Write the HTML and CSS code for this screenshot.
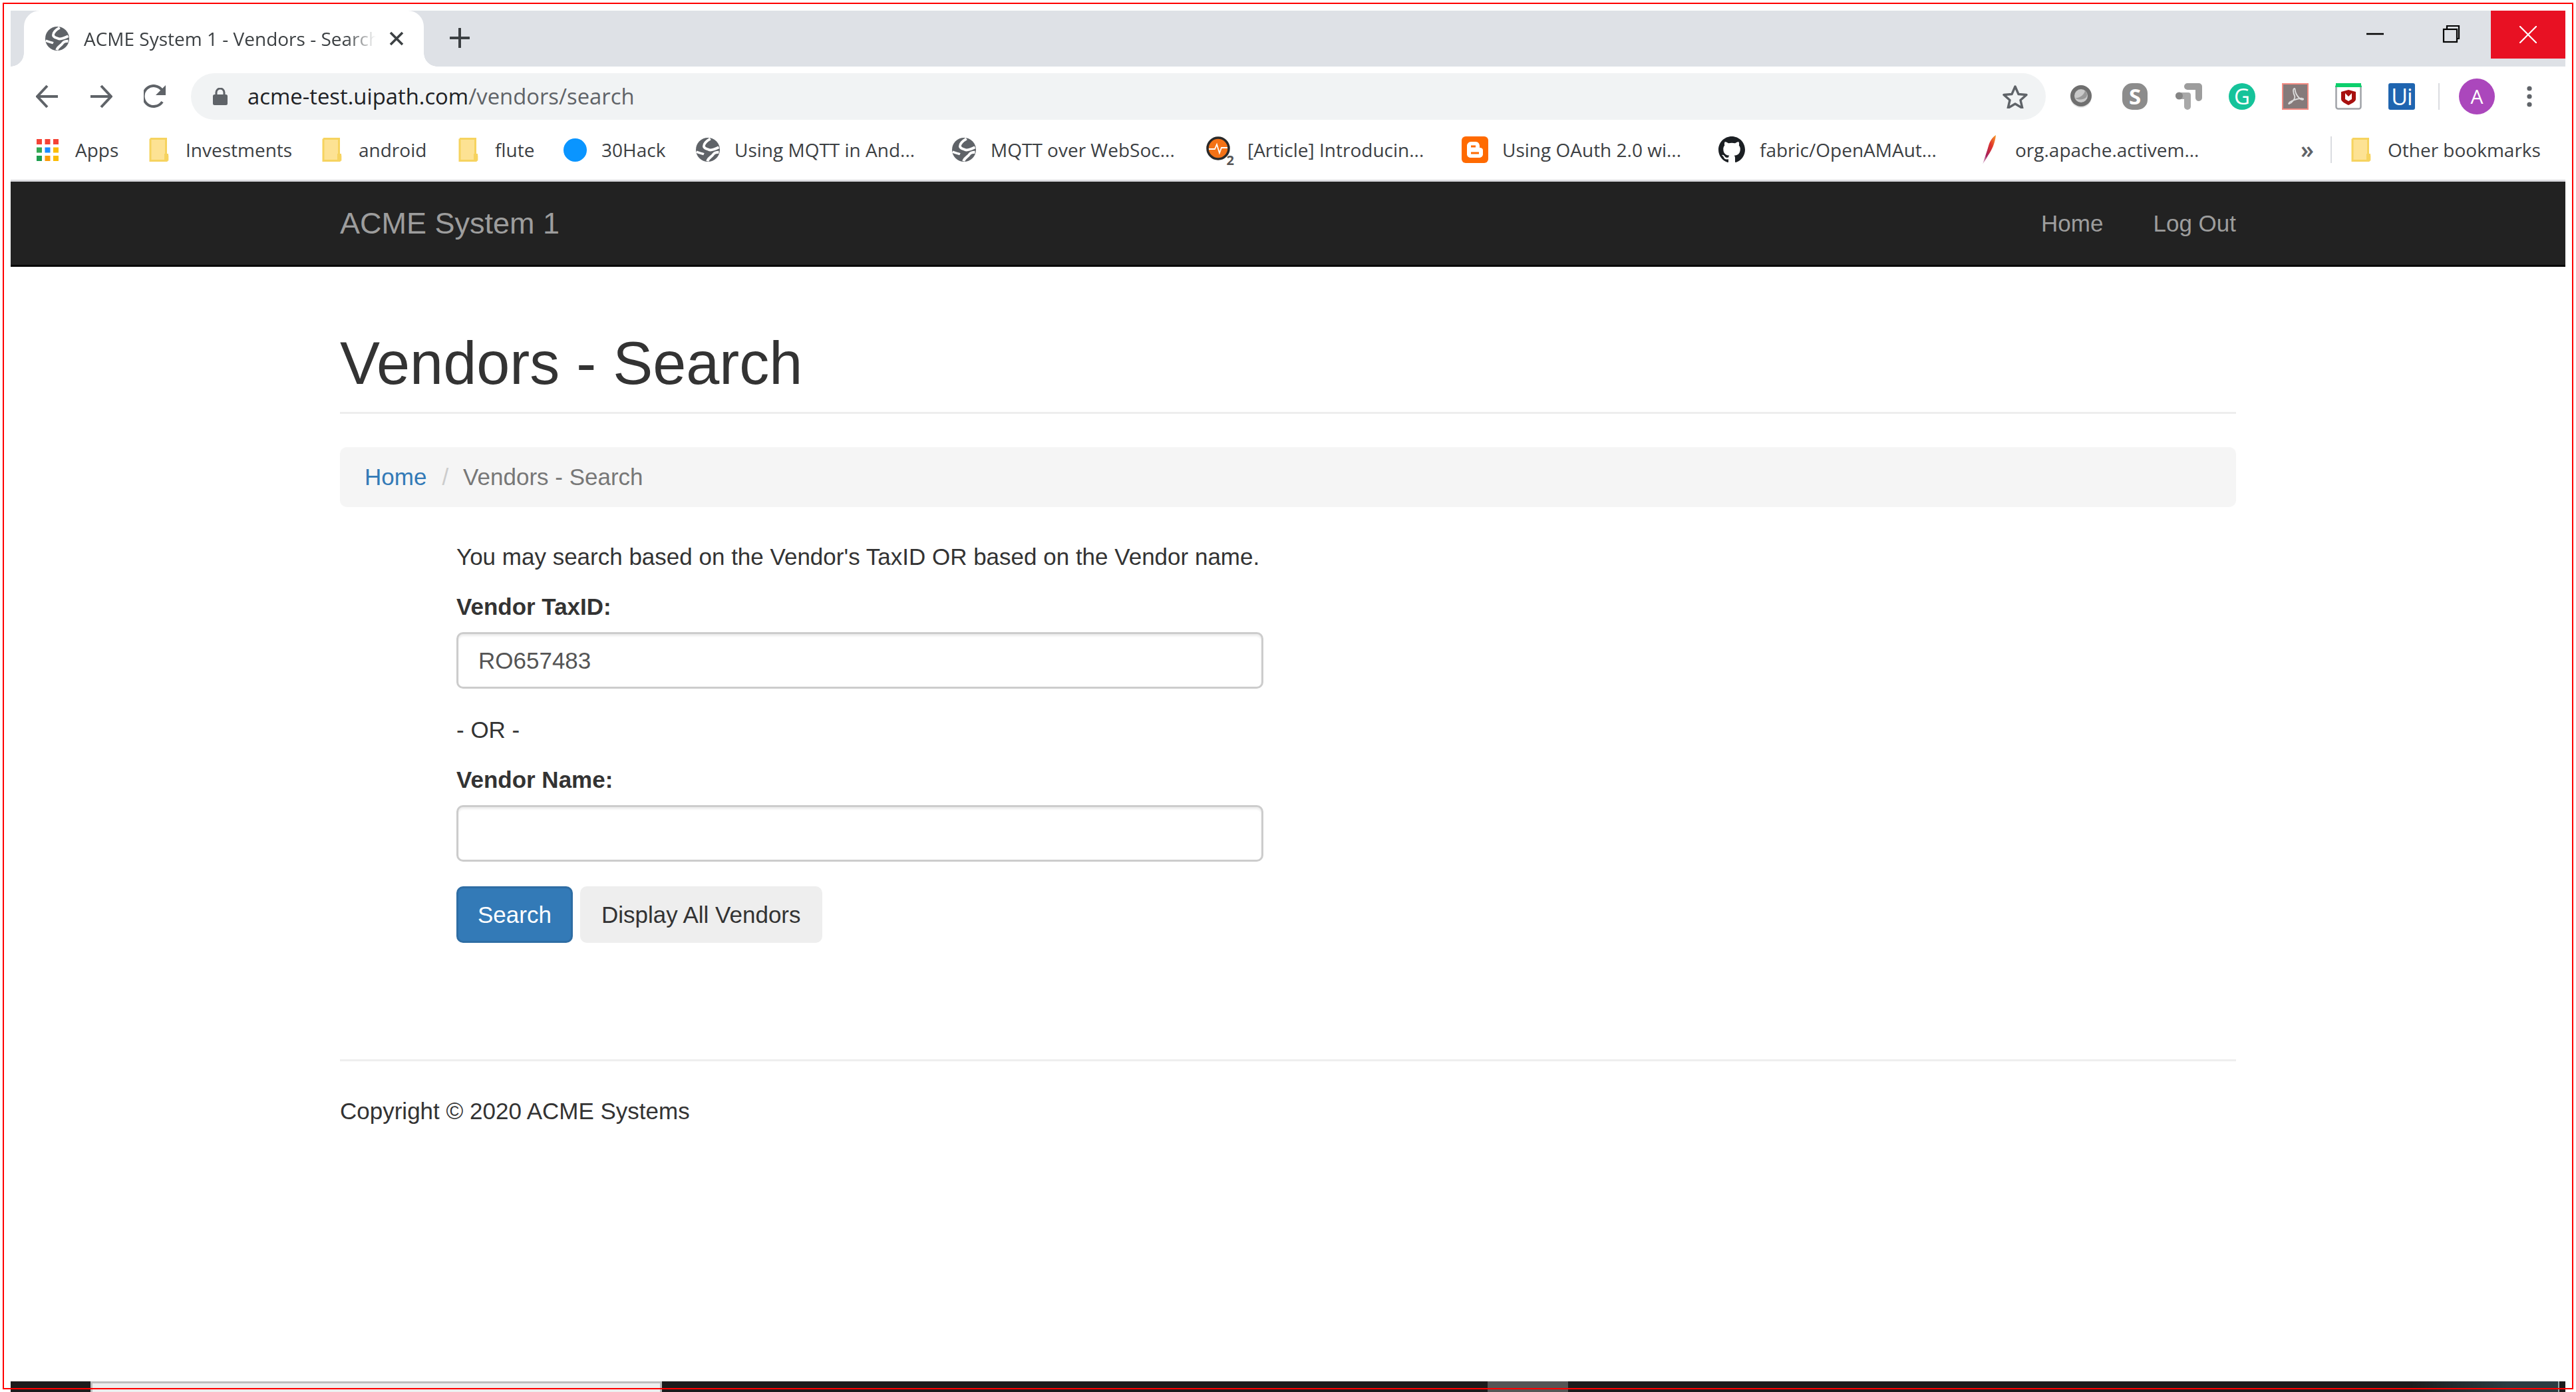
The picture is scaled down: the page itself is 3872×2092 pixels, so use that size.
FILE: index.html
```html
<!DOCTYPE html>
<html lang="en">
<head>
<meta charset="utf-8">
<title>ACME System 1 - Vendors - Search</title>
<link rel="stylesheet" href="styles.css">
</head>
<body>
<svg class="defs" width="0" height="0" aria-hidden="true">
  <symbol id="globe" viewBox="0 0 24 24">
    <circle cx="12" cy="12" r="12" fill="#5f6368"/>
    <path d="M14.500 1C11 3 8 5.500 8 8.500c0 2.500 3 2.500 5 3.500 2 1 5 0 10-2.500" fill="none" stroke="#fff" stroke-width="2.600"/>
    <path d="M11.500 23.500c1-3.500 4.500-4.500 6-7 1-1.500 2.500-2 5.500-2" fill="none" stroke="#fff" stroke-width="2.600"/>
    <path d="M.5 14c2.500 1.500 5.500 1.500 7.500 2.500" fill="none" stroke="#fff" stroke-width="2.200"/>
  </symbol>
  <symbol id="folder" viewBox="0 0 30 36">
    <path d="M1.500 1.500h25v25h3v8h-28z" fill="#fde293"/>
    <path d="M2 1.500h23.500v25M2 1.500v33h22.500a2 2 0 0 0 3-2v-7h-3v9" fill="none" stroke="#f6d35f" stroke-width="3"/>
  </symbol>
</svg>

<div class="window">
  <header class="tabstrip">
    <div class="tab">
      <svg class="tab-icon"><use href="#globe"/></svg>
      <span class="tab-title">ACME System 1 - Vendors - Search</span>
      <svg class="tab-close" viewBox="0 0 22 22"><path d="M2 2l18 18M20 2L2 20" stroke="#3c4043" stroke-width="3.600"/></svg>
    </div>
    <svg class="new-tab" viewBox="0 0 30 30"><path d="M15 1v28M1 15h28" stroke="#3c4043" stroke-width="4" stroke-linecap="round"/></svg>
    <div class="window-controls">
      <svg class="win-btn" viewBox="0 0 112 72"><path d="M37 35h26" stroke="#000" stroke-width="2.500"/></svg>
      <svg class="win-btn" viewBox="0 0 112 72"><rect x="41" y="28" width="20" height="19" fill="none" stroke="#000" stroke-width="2.200"/><path d="M46 27v-4h18v19h-3" fill="none" stroke="#000" stroke-width="2.200"/></svg>
      <div class="win-close"><svg class="win-x" viewBox="0 0 26 26"><path d="M0 0l26 26M26 0L0 26" stroke="#fff" stroke-width="2.200"/></svg></div>
    </div>
  </header>

  <div class="toolbar">
    <div class="nav-buttons">
      <svg class="nav-btn" viewBox="0 0 34 36"><path d="M33 18H3M17 2L2 18l15 16" fill="none" stroke="#5f6368" stroke-width="4"/></svg>
      <svg class="nav-btn" viewBox="0 0 34 36"><path d="M1 18h30M17 2l15 16-15 16" fill="none" stroke="#5f6368" stroke-width="4"/></svg>
      <svg class="nav-btn" viewBox="0 0 34 36"><path d="M28 26a15.500 15.500 0 1 1 0-17" fill="none" stroke="#5f6368" stroke-width="4"/><path d="M33 1v15H18z" fill="#5f6368"/></svg>
    </div>
    <div class="omnibox">
      <svg class="lock" viewBox="0 0 22 26"><path d="M5 11V7a6 6 0 0 1 12 0v4" fill="none" stroke="#5f6368" stroke-width="3"/><rect y="10" width="22" height="16" rx="2.500" fill="#5f6368"/></svg>
      <span class="url"><span class="url-host">acme-test.uipath.com</span>/vendors/search</span>
      <svg class="star" viewBox="0 0 38 36"><path d="M19 3l5 11.500 12 1-9 8 2.800 12L19 29l-10.800 6.500L11 23.500l-9-8 12-1z" fill="none" stroke="#5f6368" stroke-width="3.400" stroke-linejoin="round"/></svg>
    </div>
    <div class="extensions">
      <svg class="ext ext-o" viewBox="0 0 34 40"><circle cx="17" cy="21" r="16" fill="#e4e4e4"/><circle cx="17" cy="19" r="16" fill="#6f6f6f"/><circle cx="17" cy="19" r="10" fill="#c9c9c9"/><path d="M8 22c6 1 14-4 15-11 3 3 4 7 2 10-3 4-12 5-17 1z" fill="#999"/></svg>
      <div class="ext-s"><span>S</span></div>
      <svg class="ext ext-ga" viewBox="0 0 40 40"><path d="M18 0h17a5 5 0 0 1 5 5v17a5 5 0 0 1-10 0V10H18a5 5 0 0 1 0-10z" fill="#9d9d9d"/><path d="M5 14h14a4 4 0 0 1 4 4v17a5 5 0 0 1-10 0V24H5a5 5 0 0 1 0-10z" fill="#a8a8a8"/><circle cx="5.500" cy="19" r="5.500" fill="#858585"/></svg>
      <div class="ext-g"><span>G</span></div>
      <svg class="ext ext-pdf" viewBox="0 0 40 40"><rect x="1" y="1" width="38" height="38" fill="#857a7a" stroke="#f28b82" stroke-width="2"/><path d="M19 8c-3 0-2 7 0 11 2 4-5 11-8 12-2 1 0-3 3-4 5-2 14-5 17-4 3 1 0 3-3 1-3-2-7-7-8-12-.5-2 0-4-1-4z" fill="none" stroke="#ddd" stroke-width="1.800"/></svg>
      <svg class="ext ext-mc" viewBox="0 0 40 40"><rect x="1.500" y="1.500" width="37" height="37" rx="3" fill="#fff" stroke="#a0a3a8" stroke-width="2.500"/><path d="M0 6a3 3 0 0 1 3-3h34a3 3 0 0 1 3 3H0zM1 0h38v6H1z" fill="#0ccf6c"/><path d="M9 13l11-3 11 3v11c0 4-7 7-11 9-4-2-11-5-11-9z" fill="#a8100f"/><path d="M15 15v9l5 3 5-3v-9l-5 5z" fill="#fff"/></svg>
      <div class="ext-ui"><span>Ui</span></div>
      <div class="ext-sep"></div>
      <div class="avatar"><span>A</span></div>
      <svg class="menu-dots" viewBox="0 0 8 32"><circle cx="4" cy="4" r="3.600" fill="#5f6368"/><circle cx="4" cy="16" r="3.600" fill="#5f6368"/><circle cx="4" cy="28" r="3.600" fill="#5f6368"/></svg>
    </div>
  </div>

  <nav class="bookmarks">
    <a class="bm"><svg class="bm-icon apps" viewBox="0 0 33 33"><g fill="#f44336"><rect width="8" height="8"/><rect x="12.500" width="8" height="8"/><rect x="25" width="8" height="8"/></g><rect y="12.500" width="8" height="8" fill="#34a853"/><rect x="12.500" y="12.500" width="8" height="8" fill="#1a8cff"/><rect x="25" y="12.500" width="8" height="8" fill="#fbbc05"/><rect y="25" width="8" height="8" fill="#1e9e4f"/><rect x="12.500" y="25" width="8" height="8" fill="#fb9b0a"/><rect x="25" y="25" width="8" height="8" fill="#fbbc05"/></svg><span>Apps</span></a>
    <a class="bm"><svg class="bm-icon folder"><use href="#folder"/></svg><span>Investments</span></a>
    <a class="bm"><svg class="bm-icon folder"><use href="#folder"/></svg><span>android</span></a>
    <a class="bm"><svg class="bm-icon folder"><use href="#folder"/></svg><span>flute</span></a>
    <a class="bm"><span class="bm-dot"></span><span>30Hack</span></a>
    <a class="bm"><svg class="bm-icon globe"><use href="#globe"/></svg><span>Using MQTT in And...</span></a>
    <a class="bm"><svg class="bm-icon globe"><use href="#globe"/></svg><span>MQTT over WebSoc...</span></a>
    <a class="bm">
      <span class="o2"><svg class="o2-dial" viewBox="0 0 36 36"><circle cx="18" cy="18" r="16" fill="#f47216" stroke="#2a2a2a" stroke-width="3.500"/><path d="M4 19h9l3-7 4 13 3-8h9" fill="none" stroke="#fff" stroke-width="1.800"/></svg><span class="o2-sub">2</span></span>
      <span>[Article] Introducin...</span>
    </a>
    <a class="bm"><svg class="bm-icon blogger" viewBox="0 0 40 40"><rect width="40" height="40" rx="6" fill="#ff6a00"/><path d="M14 8h7c4 0 6 3 6 7v2c3 0 5 1 5 4v6c0 3-3 5-6 5H14c-3 0-6-2-6-5V14c0-3 3-6 6-6z" fill="#fff"/><path d="M14 15h7M14 25h12" stroke="#ff6a00" stroke-width="3.200"/></svg><span>Using OAuth 2.0 wi...</span></a>
    <a class="bm"><svg class="bm-icon github" viewBox="0 0 16 16"><path fill="#1b1f23" d="M8 0C3.580 0 0 3.580 0 8c0 3.540 2.290 6.530 5.470 7.590.4.070.55-.17.55-.38 0-.19-.01-.82-.01-1.490-2.010.37-2.530-.49-2.690-.94-.09-.23-.48-.94-.82-1.130-.28-.15-.68-.52-.01-.53.63-.01 1.080.58 1.230.82.72 1.210 1.870.87 2.330.66.07-.52.28-.87.51-1.070-1.780-.2-3.640-.89-3.640-3.950 0-.87.31-1.590.82-2.150-.08-.2-.36-1.020.08-2.120 0 0 .67-.21 2.200.82.64-.18 1.320-.27 2-.27.68 0 1.360.09 2 .27 1.530-1.040 2.200-.82 2.200-.82.44 1.100.16 1.920.08 2.120.51.56.82 1.270.82 2.150 0 3.070-1.870 3.750-3.650 3.950.29.25.54.73.54 1.480 0 1.070-.01 1.930-.01 2.200 0 .21.15.46.55.38A8.013 8.013 0 0 0 16 8c0-4.420-3.580-8-8-8z"/></svg><span>fabric/OpenAMAut...</span></a>
    <a class="bm"><svg class="bm-icon feather" viewBox="0 0 24 44"><defs><linearGradient id="feather" x1="1" y1="0" x2="0" y2="1"><stop offset="0" stop-color="#f7a12c"/><stop offset=".35" stop-color="#e0342a"/><stop offset=".7" stop-color="#a5215e"/><stop offset="1" stop-color="#e8dcec"/></linearGradient></defs><path d="M23 0c-5 3-9 9-11 16C10 24 6 34 3 44c3-5 6-9 8-13 6-8 11-20 12-31z" fill="url(#feather)"/></svg><span>org.apache.activem...</span></a>
    <span class="bm-more">»</span>
    <span class="bm-sep"></span>
    <a class="bm"><svg class="bm-icon folder"><use href="#folder"/></svg><span>Other bookmarks</span></a>
  </nav>

  <div class="site-nav">
    <div class="container nav-inner">
      <a class="brand">ACME System 1</a>
      <div class="nav-links"><a>Home</a><a>Log Out</a></div>
    </div>
  </div>

  <main class="container content">
    <h1 class="page-header">Vendors - Search</h1>
    <ol class="breadcrumb">
      <li class="crumb-link">Home</li>
      <li class="crumb-sep">/</li>
      <li class="crumb-active">Vendors - Search</li>
    </ol>
    <form class="search-form">
      <p class="intro">You may search based on the Vendor's TaxID OR based on the Vendor name.</p>
      <label class="field-label" for="tax">Vendor TaxID:</label>
      <input class="field" id="tax" type="text" value="RO657483">
      <p class="or">- OR -</p>
      <label class="field-label" for="name">Vendor Name:</label>
      <input class="field" id="name" type="text">
      <div class="actions">
        <button class="btn btn-primary" type="button">Search</button>
        <button class="btn btn-default" type="button">Display All Vendors</button>
      </div>
    </form>
    <hr class="rule">
    <footer class="copyright">Copyright © 2020 ACME Systems</footer>
  </main>

  <div class="taskbar">
    <span class="task task-a"></span>
    <span class="task task-active"></span>
    <span class="task task-b"></span>
    <span class="task task-hover"></span>
    <span class="task task-rest"></span>
    <span class="task task-end"></span>
  </div>
</div>
<div class="frame"></div>
</body>
</html>
```

FILE: styles.css
```css
* { box-sizing: border-box; }
html, body { margin: 0; padding: 0; height: 100%; background: #fff; overflow: hidden; }
body { font-family: "Liberation Sans", Arial, sans-serif; font-size: 35px; line-height: 50px; color: #333; }
.defs { position: absolute; }

.frame { position: fixed; left: 4px; top: 4px; width: 3864px; height: 2084px; border: 2px solid #f00; pointer-events: none; }

.window { height: 100vh; padding: 16px 16px 0; display: flex; flex-direction: column; }

/* tab strip */
.tabstrip { height: 84px; flex: none; background: #dee1e6; display: flex; align-items: flex-start; padding-left: 20px; font-family: "Open Sans", "Noto Sans", sans-serif; }
.tab { position: relative; width: 601px; height: 84px; background: #fff; border-radius: 24px 24px 0 0; display: flex; align-items: center; padding: 0 30px 0 32px; }
.tab::before, .tab::after { content: ""; position: absolute; bottom: 0; width: 20px; height: 20px; }
.tab::before { left: -20px; background: radial-gradient(circle at 0 0, #dee1e6 19.500px, #fff 20px); }
.tab::after { right: -20px; background: radial-gradient(circle at 100% 0, #dee1e6 19.500px, #fff 20px); }
.tab-icon { width: 36px; height: 36px; flex: none; }
.tab-title { width: 439px; margin-left: 22px; white-space: nowrap; overflow: hidden; font-size: 28px; line-height: 40px; color: #3c4043; -webkit-mask-image: linear-gradient(90deg, #000 90%, transparent); mask-image: linear-gradient(90deg, #000 90%, transparent); }
.tab-close { width: 22px; height: 22px; flex: none; margin-left: 20px; }
.new-tab { width: 30px; height: 30px; margin: 26px 0 0 39px; flex: none; }
.window-controls { margin-left: auto; display: flex; align-items: flex-start; }
.win-btn { width: 112px; height: 72px; display: block; }
.win-close { width: 112px; height: 72px; background: #e81123; display: flex; align-items: center; justify-content: center; }
.win-x { width: 26px; height: 26px; }

/* toolbar */
.toolbar { height: 80px; flex: none; display: flex; align-items: flex-end; padding-left: 38px; background: #fff; }
.nav-buttons { display: flex; gap: 47px; height: 70px; align-items: center; }
.nav-btn { width: 34px; height: 36px; }
.omnibox { width: 2788px; height: 70px; margin-left: 37px; background: #f1f3f4; border-radius: 35px; display: flex; align-items: center; padding: 0 27px 0 33px; font-family: "Open Sans", "Noto Sans", sans-serif; }
.lock { width: 22px; height: 26px; flex: none; }
.url { margin-left: 30px; font-size: 32.800px; line-height: 44px; color: #5f6368; white-space: nowrap; }
.url-host { color: #202124; }
.star { width: 38px; height: 36px; margin-left: auto; }
.extensions { height: 70px; display: flex; align-items: center; font-family: "Open Sans", "Noto Sans", sans-serif; }
.ext { display: block; flex: none; }
.ext-o { width: 34px; height: 40px; margin-left: 36px; }
.ext-s { width: 38px; height: 40px; margin-left: 45px; border-radius: 15px; background: #8c8c8c; color: #fff; font-weight: 700; font-size: 33px; line-height: 40px; text-align: center; }
.ext-ga { width: 40px; height: 40px; margin-left: 42px; }
.ext-g { width: 40px; height: 40px; margin-left: 40px; border-radius: 50%; background: #15c39a; color: #fff; font-size: 33px; line-height: 40px; text-align: center; }
.ext-pdf { width: 40px; height: 40px; margin-left: 40px; }
.ext-mc { width: 40px; height: 40px; margin-left: 40px; }
.ext-ui { width: 40px; height: 40px; margin-left: 40px; border-radius: 3px; background: #1f65b0; color: #fff; font-size: 34px; line-height: 40px; text-align: center; letter-spacing: -1px; }
.ext-sep { width: 2px; height: 40px; margin-left: 35px; background: #dadce0; }
.avatar { width: 54px; height: 54px; margin-left: 29px; border-radius: 50%; background: #ab47bc; color: #fff; font-size: 30px; line-height: 54px; text-align: center; }
.menu-dots { width: 8px; height: 32px; margin-left: 48px; }

/* bookmarks */
.bookmarks { height: 90px; flex: none; display: grid; grid-template-columns: 169px 260px 205px 158px 199px 385px 382px 384px 386px 394px 481px 45px 31px auto; align-items: center; padding-left: 39px; font-family: "Open Sans", "Noto Sans", sans-serif; font-size: 28px; line-height: 40px; color: #3c4043; background: #fff; }
.bm { display: flex; align-items: center; white-space: nowrap; }
.bm-icon { display: block; flex: none; }
.apps { width: 33px; height: 33px; margin-right: 25px; }
.folder { width: 30px; height: 36px; margin-right: 25px; }
.globe { width: 36px; height: 36px; margin-right: 22px; }
.bm-dot { width: 35px; height: 35px; border-radius: 50%; background: #0a95ff; margin-right: 22px; flex: none; }
.o2 { position: relative; width: 42px; height: 40px; margin-right: 20px; flex: none; }
.o2-dial { position: absolute; left: 0; top: 0; width: 36px; height: 36px; }
.o2-sub { position: absolute; right: 0; bottom: -6px; font-size: 20px; line-height: 20px; font-weight: 700; color: #555; }
.blogger { width: 40px; height: 40px; margin-right: 21px; }
.github { width: 40px; height: 40px; margin-right: 22px; }
.feather { width: 24px; height: 44px; margin-right: 28px; }
.bm-more { font-size: 36px; font-weight: 600; color: #5f6368; }
.bm-sep { width: 2px; height: 40px; background: #dadce0; }

/* site */
.site-nav { height: 131px; flex: none; background: #222; border-top: 3px solid #dcdce0; border-bottom: 3px solid #080808; }
.container { width: 2850px; margin-left: auto; margin-right: auto; flex: none; }
.nav-inner { display: flex; justify-content: space-between; align-items: center; height: 125px; color: #9d9d9d; }
.brand { font-size: 45px; }
.nav-links { display: flex; gap: 75px; }

.content { flex: 1; }
.page-header { margin: 96px 0 50px; padding-bottom: 23px; font-size: 90px; line-height: 99px; font-weight: 500; border-bottom: 3px solid #eee; color: #333; }
.breadcrumb { margin: 0; height: 90px; padding: 0 37px; list-style: none; display: flex; align-items: center; background: #f5f5f5; border-radius: 10px; }
.crumb-link { color: #337ab7; }
.crumb-sep { color: #ccc; margin: 0 22px 0 23px; }
.crumb-active { color: #777; }

.search-form { width: 1388px; padding-left: 175px; margin-top: 50px; }
.intro { margin: 0 0 25px; white-space: nowrap; }
.field-label { display: block; font-weight: 700; margin-bottom: 13px; }
.field { display: block; width: 100%; height: 85px; padding: 0 30px; font: inherit; color: #555; background: #fff; border: 3px solid #ccc; border-radius: 10px; box-shadow: inset 0 3px 3px rgba(0,0,0,.075); outline: none; }
.or { margin: 37px 0 25px; }
.actions { display: flex; gap: 11px; margin-top: 37px; }
.btn { height: 85px; padding: 0 29px; font: inherit; border: 3px solid transparent; border-radius: 10px; }
.btn-primary { color: #fff; background: #337ab7; border-color: #2e6da4; }
.btn-default { color: #333; background: #eee; border-color: #eee; }
.rule { margin: 175px 0 50px; border: 0; border-top: 3px solid #eee; }
.copyright { line-height: 50px; }

/* task bar sliver */
.taskbar { height: 16px; flex: none; display: flex; background: #1c1c1c; }
.task { display: block; height: 16px; }
.task-a { width: 120px; }
.task-active { width: 859px; background: #eee; border: 3px solid #bdbdbd; border-bottom: 0; }
.task-b { width: 1241px; }
.task-hover { width: 121px; background: #555; }
.task-rest { width: 1488px; background: linear-gradient(90deg, #1c1c1c 85%, #2b3d42 95%, #2b3d42); }
.task-end { flex: 1; border-left: 2px solid #9aa; }
```
